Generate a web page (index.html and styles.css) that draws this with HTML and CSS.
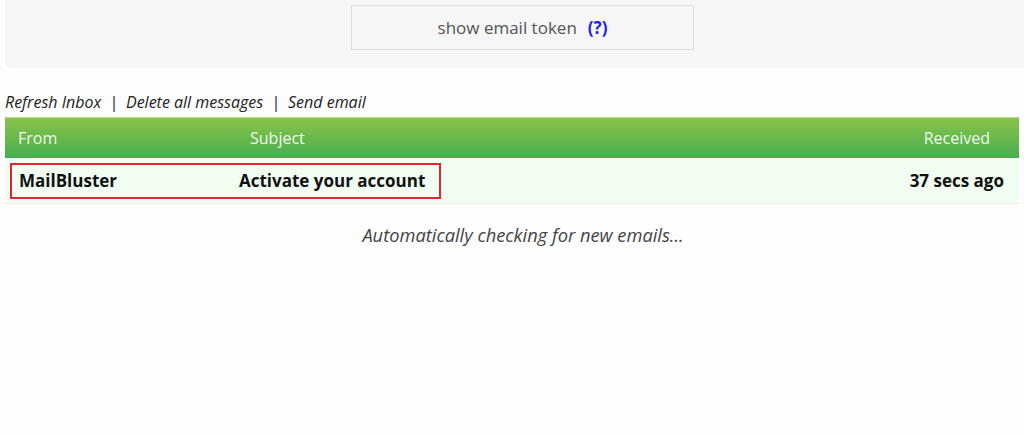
FILE: index.html
```html
<!DOCTYPE html>
<html>
<head>
<meta charset="utf-8">
<link rel="stylesheet" href="styles.css">
</head>
<body>
<div class="panel">
  <div class="token-btn">show email token <span class="help">(?)</span></div>
</div>
<div class="actions">
  <span>Refresh Inbox</span><span class="sep">|</span><span>Delete all messages</span><span class="sep">|</span><span>Send email</span>
</div>
<div class="inbox">
  <div class="thead">
    <span class="h-from">From</span>
    <span class="h-subject">Subject</span>
    <span class="h-received">Received</span>
  </div>
  <div class="row">
    <div class="highlight">
      <span class="r-from">MailBluster</span>
      <span class="r-subject">Activate your account</span>
    </div>
    <span class="r-received">37 secs ago</span>
  </div>
</div>
<p class="status">Automatically checking for new emails...</p>
</body>
</html>
```
FILE: styles.css
```css
html, body {
  margin: 0;
  padding: 0;
  background: #fdfdfd;
  font-family: "Open Sans", "DejaVu Sans", sans-serif;
  color: #222;
}
.panel {
  margin-left: 5px;
  height: 68px;
  background: #f6f6f6;
  border-bottom-left-radius: 5px;
  display: flex;
  justify-content: center;
  align-items: flex-start;
  padding-top: 5px;
  box-sizing: border-box;
}
.token-btn {
  width: 343px;
  height: 45px;
  box-sizing: border-box;
  border: 1px solid #dcdcdc;
  background: #f6f6f6;
  display: flex;
  align-items: center;
  justify-content: center;
  font-size: 17px;
  color: #555;
  margin-left: 16px;
}
.help {
  color: #2323e6;
  font-weight: bold;
  margin-left: 11px;
}
.actions {
  margin: 23px 0 0 5px;
  font-style: italic;
  font-size: 16px;
  color: #222;
  height: 23px;
  line-height: 22px;
}
.sep {
  margin: 0 8px;
}
.inbox {
  margin: 3px 5px 0 5px;
}
.thead {
  height: 41px;
  display: flex;
  align-items: center;
  background: linear-gradient(#8bc34a, #46ae50);
  color: #eef9ea;
  font-size: 16px;
  border-top: 1px solid #b6dc90;
  box-sizing: border-box;
}
.h-from { padding-left: 13px; width: 232px; }
.h-subject { flex: 1; }
.h-received { padding-right: 29px; }
.row {
  height: 46px;
  background: #f0fdf0;
  display: flex;
  align-items: center;
  border-bottom: 1px solid #eee;
  box-sizing: border-box;
  font-weight: bold;
  font-size: 17px;
  color: #111;
}
.highlight {
  margin-left: 5px;
  width: 431px;
  height: 36px;
  box-sizing: border-box;
  border: 2px solid #e3262d;
  display: flex;
  align-items: center;
  padding-left: 7px;
}
.r-from { width: 220px; }
.r-received {
  margin-left: auto;
  padding-right: 15px;
}
.status {
  margin: 18px 0 0 0;
  padding-left: 22px;
  text-align: center;
  font-style: italic;
  font-size: 18.3px;
  color: #444;
}
```
